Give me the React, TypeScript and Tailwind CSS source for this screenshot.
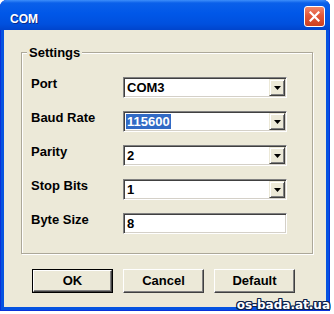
import React from 'react';

const ui = { fontFamily: '"Liberation Sans", Arial, sans-serif' };

function DropArrow() {
  return (
    <svg width="7" height="4" viewBox="0 0 7 4">
      <path d="M0 0 H7 L3.5 4 Z" fill="#000" />
    </svg>
  );
}

function Field({ label, value, combo = true, selected = false }: { label: string; value: string; combo?: boolean; selected?: boolean }) {
  return (
    <div className="flex items-start h-[21px]">
      <div className="w-[92px] text-[13px] leading-[14px] font-bold text-black">{label}</div>
      <div className="flex w-[164px] h-[21px] p-[1px] bg-white border border-t-[#808080] border-l-[#808080] border-r-white border-b-white shadow-[inset_1px_1px_0_#404040,inset_-1px_-1px_0_#D4D0C8]">
        <div className="flex-1 flex items-center pl-[1px] text-[13px] font-bold text-black">
          {selected ? (
            <span className="bg-[#316AC5] text-white leading-[15px] px-[1px]">{value}</span>
          ) : (
            <span className="leading-[17px] pl-[1px]">{value}</span>
          )}
        </div>
        {combo && (
          <div className="w-[16px] flex items-center justify-center bg-[#ECE9D8] border border-t-[#ECE9D8] border-l-[#ECE9D8] border-r-[#404040] border-b-[#404040] shadow-[inset_1px_1px_0_#fff,inset_-1px_-1px_0_#808080]">
            <DropArrow />
          </div>
        )}
      </div>
    </div>
  );
}

function Btn({ children, isDefault = false }: { children: React.ReactNode; isDefault?: boolean }) {
  return (
    <div className={`w-[81px] h-[24px] ${isDefault ? 'border border-black' : ''}`}>
      <div className="h-full flex items-center justify-center bg-[#ECE9D8] border border-t-white border-l-white border-r-[#404040] border-b-[#404040] shadow-[inset_-1px_-1px_0_#808080] text-[13px] font-bold text-black">
        {children}
      </div>
    </div>
  );
}

export default function App() {
  return (
    <div className="relative w-[334px] h-[314px] bg-white overflow-hidden" style={ui}>
      <div className="w-[330px] h-[311px] flex flex-col rounded-t-[7px] overflow-hidden bg-[#0553E1] shadow-[inset_1px_0_0_#0831D9,inset_-1px_0_0_#0831D9,inset_0_-1px_0_#0831D9]">
        {/* Title bar */}
        <div className="h-[30px] flex justify-between bg-[linear-gradient(180deg,#3D8EFA_0%,#0A60EA_10%,#0057E8_45%,#0050DE_80%,#0044CC_100%)]">
          <div className="pl-[10px] pt-[13px] text-[12px] leading-[12px] font-bold text-white [text-shadow:1px_1px_0_#0A2A8C]">COM</div>
          <div className="mt-[6px] mr-[5px] w-[21px] h-[21px] rounded-[3px] border border-white flex items-center justify-center bg-[linear-gradient(180deg,#F0876A_0%,#E2583A_45%,#CC4020_100%)]">
            <svg width="11" height="11" viewBox="0 0 11 11">
              <path d="M1.5 1.5 L9.5 9.5 M9.5 1.5 L1.5 9.5" stroke="#fff" strokeWidth="2.2" strokeLinecap="square" />
            </svg>
          </div>
        </div>

        {/* Body */}
        <div className="flex-1 mx-[4px] mb-[4px] bg-[#ECE9D8] flex flex-col">
          <div className="relative ml-[17px] mt-[22px] w-[292px] h-[202px] border border-[#ACA899] shadow-[inset_1px_1px_0_#fff,1px_1px_0_#fff]">
            <span className="absolute top-[-7px] left-[5px] px-[2px] bg-[#ECE9D8] text-[13px] leading-[13px] font-bold text-black">Settings</span>
            <div className="pt-[24px] pl-[9px] flex flex-col gap-[13px]">
              <Field label="Port" value="COM3" />
              <Field label="Baud Rate" value="115600" selected />
              <Field label="Parity" value="2" />
              <Field label="Stop Bits" value="1" />
              <Field label="Byte Size" value="8" combo={false} />
            </div>
          </div>

          <div className="flex gap-[10px] ml-[28px] mt-[15px]">
            <Btn isDefault>OK</Btn>
            <Btn>Cancel</Btn>
            <Btn>Default</Btn>
          </div>
        </div>
      </div>

      {/* Watermark */}
      <div
        className="absolute right-[4px] bottom-[1px] text-[12px] leading-[15px] font-bold text-white [text-shadow:1px_0_0_#0B1F4A,-1px_0_0_#0B1F4A,0_1px_0_#0B1F4A,0_-1px_0_#0B1F4A,1px_1px_0_#0B1F4A,-1px_-1px_0_#0B1F4A,1px_-1px_0_#0B1F4A,-1px_1px_0_#0B1F4A]"
        style={{ fontFamily: '"DejaVu Sans", Verdana, sans-serif' }}
      >
        os-bada.at.ua
      </div>
    </div>
  );
}
